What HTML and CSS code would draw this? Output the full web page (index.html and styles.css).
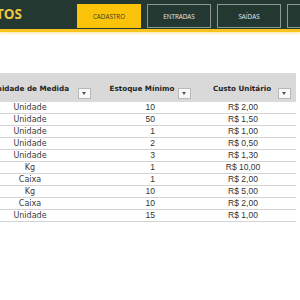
FILE: index.html
```
<!DOCTYPE html>
<html lang="pt">
<head>
<meta charset="utf-8">
<link rel="stylesheet" href="styles.css">
</head>
<body>
<header class="topbar">
  <div class="title"><span class="title-text">PRODUTOS</span></div>
  <nav class="tabs">
    <div class="tab active">CADASTRO</div>
    <div class="tab">ENTRADAS</div>
    <div class="tab">SAÍDAS</div>
    <div class="tab">ESTOQUE</div>
  </nav>
</header>
<main class="sheet">
  <div class="table">
    <div class="th th-first"><span class="th-label">Unidade de Medida</span><span class="filter"></span></div>
    <div class="th"><span class="th-label">Estoque Mínimo</span><span class="filter"></span></div>
    <div class="th"><span class="th-label">Custo Unitário</span><span class="filter"></span></div>

    <div class="td unit">Unidade</div><div class="td qty">10</div><div class="td cost">R$ 2,00</div>
    <div class="td unit">Unidade</div><div class="td qty">50</div><div class="td cost">R$ 1,50</div>
    <div class="td unit">Unidade</div><div class="td qty">1</div><div class="td cost">R$ 1,00</div>
    <div class="td unit">Unidade</div><div class="td qty">2</div><div class="td cost">R$ 0,50</div>
    <div class="td unit">Unidade</div><div class="td qty">3</div><div class="td cost">R$ 1,30</div>
    <div class="td unit">Kg</div><div class="td qty">1</div><div class="td cost">R$ 10,00</div>
    <div class="td unit">Caixa</div><div class="td qty">1</div><div class="td cost">R$ 2,00</div>
    <div class="td unit">Kg</div><div class="td qty">10</div><div class="td cost">R$ 5,00</div>
    <div class="td unit">Caixa</div><div class="td qty">10</div><div class="td cost">R$ 2,00</div>
    <div class="td unit">Unidade</div><div class="td qty">15</div><div class="td cost">R$ 1,00</div>
  </div>
</main>
</body>
</html>
```
FILE: styles.css
```
html, body {
  margin: 0;
  padding: 0;
  width: 300px;
  height: 300px;
  overflow: hidden;
  background: #ffffff;
}

.topbar {
  display: flex;
  height: 29px;
  background: #243832;
  border-bottom: 3px solid #f9c31d;
  box-shadow: 0 2px 2px rgba(249, 214, 110, 0.45);
}

.title {
  flex: 0 0 22px;
  width: 22px;
  display: flex;
  justify-content: flex-end;
  overflow: hidden;
  padding-top: 6px;
}

.title-text {
  flex-shrink: 0;
  font-family: "Open Sans", sans-serif;
  font-weight: 700;
  font-size: 13.5px;
  line-height: 17px;
  color: #efc640;
}

.tabs {
  flex-shrink: 0;
  display: flex;
  gap: 6px;
  margin-left: 55px;
  padding-top: 4px;
}

.tab {
  flex-shrink: 0;
  box-sizing: border-box;
  width: 64px;
  height: 24px;
  border: 1px solid #8d9893;
  color: #e4e8e6;
  font-family: "Open Sans", sans-serif;
  font-size: 6.3px;
  display: flex;
  align-items: center;
  justify-content: center;
}

.tab.active {
  background: #fcc30b;
  border-color: #fcc30b;
  color: #3a3a2a;
}

.sheet {
  padding-top: 41px;
}

.table {
  display: grid;
  grid-template-columns: 132px 100px 100px;
  margin-left: -36px;
  font-family: "Liberation Sans", Arial, sans-serif;
  color: #333333;
}

.th {
  position: relative;
  height: 29px;
  background: #d9d9d9;
  text-align: center;
  padding-right: 8px;
}

.th-first {
  padding-right: 0;
}

.th-label {
  display: block;
  padding-top: 11px;
  font-family: "DejaVu Sans", sans-serif;
  font-weight: 700;
  font-size: 7.2px;
  line-height: 10px;
  color: #262626;
}

.filter {
  position: absolute;
  right: 5px;
  top: 15px;
  box-sizing: border-box;
  width: 13px;
  height: 11px;
  background: #f8f8f8;
  border: 1px solid #b9b9b9;
}

.filter::after {
  content: "";
  position: absolute;
  left: 3px;
  top: 3px;
  border-left: 2.5px solid transparent;
  border-right: 2.5px solid transparent;
  border-top: 3px solid #555555;
}

.td {
  height: 11px;
  line-height: 11px;
  border-bottom: 1px solid #d3d3d3;
  font-size: 8.5px;
  white-space: nowrap;
}

.unit {
  text-align: center;
  font-family: "DejaVu Sans", sans-serif;
  font-size: 8px;
  color: #3a3a3a;
}

.qty {
  text-align: right;
  padding-right: 41px;
}

.cost {
  text-align: center;
  padding-right: 6px;
}
```
